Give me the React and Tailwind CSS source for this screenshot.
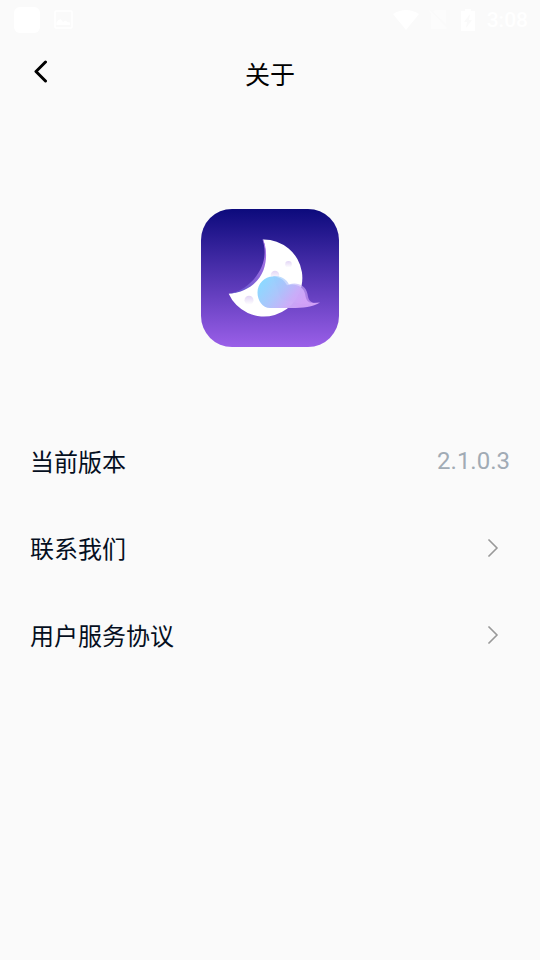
import React from 'react';

const rows = [
  { label: '当前版本', value: '2.1.0.3' },
  { label: '联系我们' },
  { label: '用户服务协议' },
];

function StatusBar() {
  return (
    <div className="flex h-10 items-center justify-between pl-3.5 pr-3 text-white">
      <div className="flex items-center gap-3.5">
        <span className="h-[26px] w-[26px] rounded-md bg-white" />
        <svg className="h-5 w-5" viewBox="0 0 20 20" fill="none">
          <rect x="1" y="1" width="17" height="17" rx="1" stroke="currentColor" strokeWidth="1.5" />
          <path d="M2.5 15v-2.5l2-2.5 2-1 2.5 3 2.5-1.5 2 1.5 2.5.5V15z" fill="currentColor" />
        </svg>
      </div>
      <div className="flex items-center">
        <svg className="mr-2.5 h-5 w-[26px]" viewBox="0 0 26 20" fill="currentColor">
          <path d="M13 20 0 4Q13-4 26 4z" />
        </svg>
        <svg className="mr-3.5 h-5 w-[18px] opacity-40" viewBox="0 0 18 20" fill="currentColor">
          <path d="M6 0h11v14L4 2zM0 1l1-1 17 18-1 1H2V4z" />
        </svg>
        <svg className="mr-3 h-[22px] w-3.5" viewBox="0 0 14 22" fill="currentColor">
          <path fillRule="evenodd" d="M4 0h6v2h4v20H0V2h4zM9 5l-6 8h3l-1 6 6-8H8z" />
        </svg>
        <span className="text-[21px] font-medium leading-6">3:08</span>
      </div>
    </div>
  );
}

function Header() {
  return (
    <header className="grid h-16 grid-cols-3 items-center px-6">
      <button type="button" aria-label="返回" className="flex h-8 w-8 items-center justify-center">
        <svg className="h-6 w-6" viewBox="0 0 24 24" fill="none">
          <path d="M17.5 2 8 11.5l9.5 9.5" stroke="#000" strokeWidth="3" strokeLinecap="round" strokeLinejoin="round" />
        </svg>
      </button>
      <h1 className="pt-2 text-center text-[25px] leading-8 text-black">关于</h1>
    </header>
  );
}

function AppLogo() {
  return (
    <svg className="h-[138px] w-[138px]" viewBox="0 0 138 138" fill="none">
      <defs>
        <linearGradient id="sky" x1="0" y1="0" x2="0" y2="1">
          <stop offset="0" stopColor="#0c0a7c" />
          <stop offset="1" stopColor="#9a5fe8" />
        </linearGradient>
        <linearGradient id="rim" gradientUnits="userSpaceOnUse" x1="62" y1="30" x2="28" y2="85">
          <stop offset="0" stopColor="#b07ae8" />
          <stop offset="0.5" stopColor="#8f68dc" />
          <stop offset="1" stopColor="#5a50c8" />
        </linearGradient>
        <linearGradient id="cloud" gradientUnits="userSpaceOnUse" x1="63" y1="72" x2="98" y2="99">
          <stop offset="0" stopColor="#8ad6ff" />
          <stop offset="0.4" stopColor="#a8c3fb" />
          <stop offset="0.75" stopColor="#c9abf8" />
          <stop offset="1" stopColor="#d3a3f8" />
        </linearGradient>
        <linearGradient id="crater" x1="0" y1="0" x2="0" y2="1">
          <stop offset="0" stopColor="#e2d5f5" />
          <stop offset="1" stopColor="#fff" />
        </linearGradient>
      </defs>
      <rect width="138" height="138" rx="31" fill="url(#sky)" />
      <path d="M62 30.5A38.5 38.5 0 1 1 27.7 84.7A40.5 40.5 0 0 0 62 30.5z" fill="#fff" />
      <path d="M61.5 30.5C64.5 39 64.5 49 60.5 58C54.5 71.5 43 82 27.7 84.7C45 84 57.5 74 62.5 61C66.5 50 65.5 38 62 30.5z" fill="url(#rim)" />
      <circle cx="87.5" cy="55.3" r="3.3" fill="url(#crater)" />
      <circle cx="74" cy="66" r="4.3" fill="url(#crater)" />
      <circle cx="48" cy="91.3" r="4.5" fill="url(#crater)" />
      <path
        d="M72 67.3C79 66 85.5 70 88 75.5C96 72.5 105 76.5 106.5 85C107.3 90 108.5 93.5 114 94L100 95L80 90z"
        fill="url(#cloud)"
        fillOpacity="0.65"
      />
      <path
        d="M72 67.5C78.5 67.5 83.5 71 86 76.3C94 73.5 103.3 77.5 104.3 86C105 91 107 94 112 94L119 93.5C112 98 102 99 90 99H69C61.5 99 56.5 91.5 56.5 83.5C56.5 74.5 63.5 67.5 72 67.5z"
        fill="url(#cloud)"
        fillOpacity="0.96"
      />
    </svg>
  );
}

function Row({ label, value }) {
  if (value) {
    return (
      <div className="flex h-[87px] items-center justify-between">
        <span className="pt-1">{label}</span>
        <span className="text-[#a1abb5]">{value}</span>
      </div>
    );
  }

  return (
    <button type="button" className="flex h-[87px] w-full items-center justify-between pr-3 text-left">
      <span className="pt-1">{label}</span>
      <svg className="h-[18px] w-2.5" viewBox="0 0 10 18" fill="none">
        <path d="M1 1l8 8-8 8" stroke="#999" strokeWidth="1.75" strokeLinecap="round" strokeLinejoin="round" />
      </svg>
    </button>
  );
}

function App() {
  return (
    <div className="min-h-screen bg-[#fafafa] font-['Roboto','Noto_Sans_CJK_SC',sans-serif]">
      <StatusBar />
      <Header />
      <main className="px-[30px] pt-[105px]">
        <div className="flex justify-center">
          <AppLogo />
        </div>
        <div className="mt-[70px] text-2xl text-[#050f1e]">
          {rows.map((row) => (
            <Row key={row.label} label={row.label} value={row.value} />
          ))}
        </div>
      </main>
    </div>
  );
}

export default App;
